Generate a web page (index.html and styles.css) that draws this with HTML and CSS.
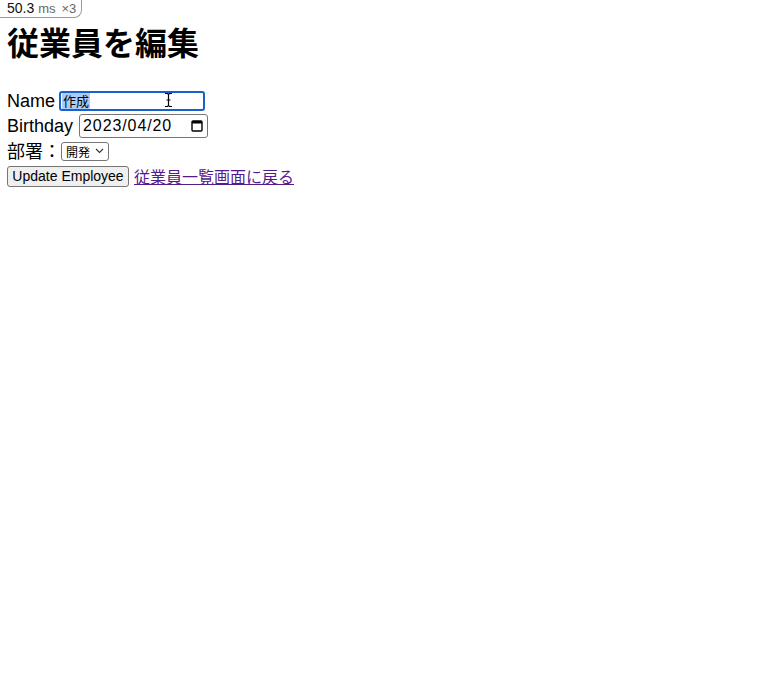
FILE: index.html
```html
<!DOCTYPE html>
<html lang="ja">
<head>
<meta charset="utf-8">
<title>従業員を編集</title>
<link rel="stylesheet" href="styles.css">
</head>
<body>
<div class="perf-badge"><span class="perf-num">50.3</span> <span class="perf-unit">ms</span> <span class="perf-count">×3</span></div>
<h1 class="title">従業員を編集</h1>
<form class="emp-form">
  <div class="row row-name">
    <label class="lbl">Name</label>
    <span class="field field-name"><span class="sel">作成</span><svg class="ibeam" width="9" height="16" viewBox="0 0 9 16"><path d="M1 1.5h2.5L4.5 2.5L5.5 1.5H8M4.5 2.5v11M1 14.5h2.5L4.5 13.5L5.5 14.5H8M2.5 8h4" fill="none" stroke="#000" stroke-width="1.2"/></svg></span>
  </div>
  <div class="row row-birth">
    <label class="lbl">Birthday</label>
    <span class="field field-date"><span class="date-text">2023/04/20</span><svg class="cal" width="12" height="13" viewBox="0 0 12 13"><rect x="1" y="2" width="10" height="10" rx="1" fill="none" stroke="#000" stroke-width="1.4"/><rect x="1" y="2" width="10" height="2.5" fill="#000"/></svg></span>
  </div>
  <div class="row row-dept">
    <label class="lbl lbl-dept">部署：</label>
    <span class="field field-select">開発<svg class="chev" width="9" height="6" viewBox="0 0 9 6"><path d="M1 1l3.5 3.5L8 1" fill="none" stroke="#333" stroke-width="1.1"/></svg></span>
  </div>
  <div class="row row-actions">
    <button type="button" class="btn">Update Employee</button>
    <a class="back" href="#">従業員一覧画面に戻る</a>
  </div>
</form>
</body>
</html>
```
FILE: styles.css
```css
html, body {
  background: #fff;
}
body {
  margin: 8px 8px 8px 7px;
  font-family: "Liberation Sans", "Noto Sans CJK JP", sans-serif;
  font-size: 18px;
  color: #000;
}
.perf-badge {
  position: absolute;
  left: 0;
  top: 0;
  height: 18px;
  width: 82px;
  box-sizing: border-box;
  border: 1px solid #9a9a9a;
  border-top: none;
  border-left: none;
  border-bottom-right-radius: 8px;
  font-size: 14px;
  line-height: 17px;
  padding-left: 7px;
  color: #111;
  white-space: nowrap;
}
.perf-unit, .perf-count {
  color: #666;
  font-size: 13px;
}
.perf-count {
  margin-left: 2px;
}
.title {
  margin: 15px 0 0;
  font-family: "Noto Sans CJK JP", sans-serif;
  font-size: 32px;
  font-weight: 700;
  line-height: 36px;
  height: 36px;
}
.emp-form {
  margin-top: 31px;
}
.row {
  display: flex;
  align-items: center;
  height: 24px;
}
.row-name { height: 22px; }
.row-birth { height: 25px; margin-top: 1px; }
.row-dept { height: 24px; margin-top: 0; }
.row-actions { height: 24px; margin-top: 2px; }
.lbl {
  line-height: 22px;
}
.field {
  box-sizing: border-box;
  display: inline-flex;
  align-items: center;
  position: relative;
}
.field-name {
  margin-left: 4px;
  width: 146px;
  height: 20px;
  border: 2px solid #1a5fd0;
  border-radius: 3px;
  font-family: "Noto Sans CJK JP", sans-serif;
  font-size: 13px;
  padding-left: 1px;
}
.sel {
  background: #a9cdf7;
  line-height: 16px;
  padding: 0 1px;
}
.ibeam {
  position: absolute;
  left: 103px;
  top: -1px;
}
.field-date {
  margin-left: 6px;
  width: 129px;
  height: 24px;
  border: 1px solid #767676;
  border-radius: 3px;
  font-size: 16px;
  padding: 0 4px 0 3px;
  justify-content: space-between;
  letter-spacing: 0.9px;
}
.cal { flex: none; }
.lbl-dept {
  font-family: "Noto Sans CJK JP", sans-serif;
  font-size: 18px;
  width: 54px;
}
.field-select {
  width: 48px;
  height: 19px;
  border: 1px solid #767676;
  border-radius: 3px;
  font-family: "Noto Sans CJK JP", sans-serif;
  font-size: 12px;
  padding: 0 4px 0 4px;
  justify-content: space-between;
  margin-top: 2px;
}
.chev { flex: none; }
.btn {
  box-sizing: border-box;
  width: 122px;
  height: 21px;
  padding: 0;
  border: 1px solid #767676;
  border-radius: 3px;
  background: #efefef;
  font-family: "Liberation Sans", sans-serif;
  font-size: 14px;
  color: #000;
}
.back {
  margin-left: 5px;
  color: #551a8b;
  font-family: "Noto Sans CJK JP", sans-serif;
  font-size: 16px;
  line-height: 22px;
  text-decoration: underline;
}
```
